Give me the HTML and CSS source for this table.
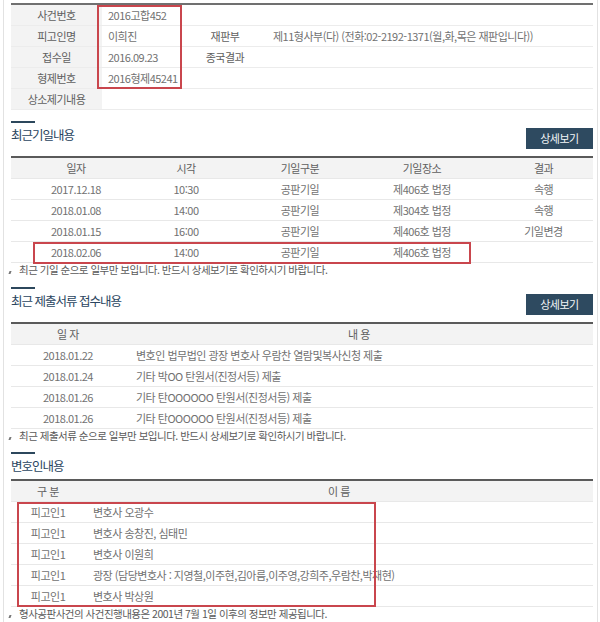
FILE: index.html
```html
<!DOCTYPE html>
<html lang="ko">
<head>
<meta charset="utf-8">
<link rel="stylesheet" href="styles.css">
</head>
<body>
<div class="page">
  <div class="info">
    <div class="info-row">
      <div class="th">사건번호</div><div class="td v1 wide">2016고합452</div>
    </div>
    <div class="info-row">
      <div class="th">피고인명</div><div class="td v1">이희진</div>
      <div class="th2">재판부</div><div class="td v2">제11형사부(다) (전화:02-2192-1371(월,화,목은 재판입니다))</div>
    </div>
    <div class="info-row">
      <div class="th">접수일</div><div class="td v1">2016.09.23</div>
      <div class="th2">종국결과</div><div class="td v2"></div>
    </div>
    <div class="info-row">
      <div class="th">형제번호</div><div class="td v1 wide">2016형제45241</div>
    </div>
    <div class="info-row">
      <div class="th">상소제기내용</div><div class="td v1 wide"></div>
    </div>
    <div class="mark mark1"></div>
  </div>

  <div class="sec">
    <div class="sec-head">
      <h2 class="title">최근기일내용</h2>
      <div class="btn">상세보기</div>
    </div>
    <div class="grid g5">
      <div class="row head"><span>일자</span><span>시각</span><span>기일구분</span><span>기일장소</span><span class="last">결과</span></div>
      <div class="row"><span>2017.12.18</span><span>10:30</span><span>공판기일</span><span>제406호 법정</span><span class="last">속행</span></div>
      <div class="row"><span>2018.01.08</span><span>14:00</span><span>공판기일</span><span>제304호 법정</span><span class="last">속행</span></div>
      <div class="row"><span>2018.01.15</span><span>16:00</span><span>공판기일</span><span>제406호 법정</span><span class="last">기일변경</span></div>
      <div class="row"><span>2018.02.06</span><span>14:00</span><span>공판기일</span><span>제406호 법정</span><span class="last"></span></div>
      <div class="mark mark2"></div>
    </div>
    <p class="note">최근 기일 순으로 일부만 보입니다. 반드시 상세보기로 확인하시기 바랍니다.</p>
  </div>

  <div class="sec sec3">
    <div class="sec-head">
      <h2 class="title">최근 제출서류 접수내용</h2>
      <div class="btn">상세보기</div>
    </div>
    <div class="grid g2">
      <div class="row head"><span>일 자</span><span class="c">내 용</span></div>
      <div class="row"><span>2018.01.22</span><span>변호인 법무법인 광장 변호사 우람찬 열람및복사신청 제출</span></div>
      <div class="row"><span>2018.01.24</span><span>기타 박OO 탄원서(진정서등) 제출</span></div>
      <div class="row"><span>2018.01.26</span><span>기타 탄OOOOOO 탄원서(진정서등) 제출</span></div>
      <div class="row"><span>2018.01.26</span><span>기타 탄OOOOOO 탄원서(진정서등) 제출</span></div>
    </div>
    <p class="note">최근 제출서류 순으로 일부만 보입니다. 반드시 상세보기로 확인하시기 바랍니다.</p>
  </div>

  <div class="sec sec4">
    <div class="sec-head">
      <h2 class="title">변호인내용</h2>
    </div>
    <div class="grid g3">
      <div class="row head"><span>구 분</span><span class="c">이 름</span></div>
      <div class="row"><span>피고인1</span><span>변호사 오광수</span></div>
      <div class="row"><span>피고인1</span><span>변호사 송창진, 심태민</span></div>
      <div class="row"><span>피고인1</span><span>변호사 이원희</span></div>
      <div class="row"><span>피고인1</span><span>광장 (담당변호사 : 지영철,이주현,김아름,이주영,강희주,우람찬,박재현)</span></div>
      <div class="row"><span>피고인1</span><span>변호사 박상원</span></div>
      <div class="mark mark3"></div>
    </div>
    <p class="note">형사공판사건의 사건진행내용은 2001년 7월 1일 이후의 정보만 제공됩니다.</p>
  </div>
</div>
</body>
</html>
```

FILE: styles.css
```css
* { box-sizing: border-box; }
html, body { margin: 0; padding: 0; background: #fff; }
body {
  font-family: "Noto Sans CJK KR", "Noto Sans", sans-serif;
  font-size: 11px;
  letter-spacing: -0.5px;
  color: #717171;
}
.page {
  width: 595px;
  height: 622px;
  margin-left: 3px;
  border-left: 1px solid #e2e2e2;
  border-right: 1px solid #e2e2e2;
  padding: 3px 4px 0 7px;
  overflow: hidden;
}
.info {
  position: relative;
  border-top: 2px solid #707070;
}
.info-row {
  display: flex;
  height: 21px;
  border-bottom: 1px solid #ececec;
  line-height: 20px;
}
.th {
  width: 91px;
  background: #f3f3f3;
  text-align: center;
  color: #606060;
}
.td { padding-left: 6px; }
.v1 { width: 86px; }
.v1.wide { flex: 1; }
.th2 {
  width: 74px;
  text-align: center;
  color: #606060;
}
.v2 { flex: 1; padding-left: 11px; }

.mark {
  position: absolute;
  border: 2px solid #c9464d;
  pointer-events: none;
}
.mark1 { left: 86px; top: 0px; width: 85px; height: 84px; }
.mark2 { left: 22px; top: 84px; width: 438px; height: 22px; }
.mark3 { left: 6px; top: 21px; width: 359px; height: 105px; }

.sec { margin-top: 11px; }
.sec-head {
  display: flex;
  justify-content: space-between;
  align-items: flex-start;
  margin-bottom: 7px;
}
.title {
  margin: 0;
  font-size: 12.5px;
  font-weight: normal;
  color: #2a4560;
  letter-spacing: -1px;
  line-height: 15px;
}
.title::before {
  content: "";
  display: block;
  width: 24px;
  height: 2px;
  background: #2c475c;
  margin-bottom: 4px;
}
.btn {
  margin-top: 7px;
  width: 67px;
  height: 21px;
  line-height: 21px;
  background: #2e4a60;
  color: #f4f6f8;
  text-align: center;
  font-size: 11px;
}

.grid {
  position: relative;
  border-top: 2px solid #5a5a5a;
}
.row {
  display: grid;
  height: 21px;
  line-height: 20px;
  border-bottom: 1px solid #e8e8e8;
}
.row.head { background: #f3f3f3; color: #606060; }
.g5 .row { grid-template-columns: 130px 90px 138px 106px 1fr; text-align: center; }
.g5 .last { padding-left: 19px; }
.g2 .row { grid-template-columns: 114px 1fr; }
.g2 .row span:first-child { text-align: center; }
.g2 .row span + span { padding-left: 11px; }
.g2 .row span.c { text-align: center; padding-left: 0; }
.g3 .row { grid-template-columns: 74px 1fr; }
.g3 .row span:first-child { text-align: center; }
.g3 .row span + span { padding-left: 8px; }
.g3 .row span.c { text-align: center; padding-left: 0; }

.note {
  position: relative;
  margin: 0 0 0 -3px;
  padding-left: 11px;
  line-height: 14px;
  font-size: 10.5px;
  color: #5a5a5a;
}
.note::before {
  content: "";
  position: absolute;
  left: 1px;
  top: 8px;
  width: 2px;
  height: 3px;
  background: #777;
  transform: skewX(-20deg);
}
.sec3 { margin-top: 10px; }
.sec4 { margin-top: 9px; }
.sec4 .sec-head { margin-bottom: 6px; }
```
